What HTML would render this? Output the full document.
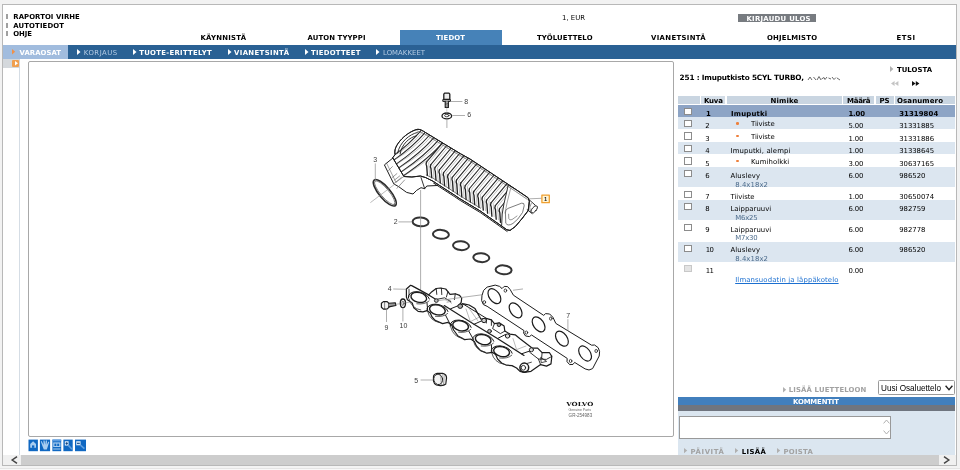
<!DOCTYPE html>
<html lang="fi"><head><meta charset="utf-8"><title>Varaosat</title>
<style>
html,body{margin:0;padding:0;width:960px;height:470px;overflow:hidden;background:#f2f2f2;}
body{position:relative;font-family:"DejaVu Sans","Liberation Sans",sans-serif;}
#app div{position:absolute;}
#app span.t{position:absolute;line-height:10px;white-space:nowrap;display:block;}
#app svg{position:absolute;overflow:visible;}
b,.b{font-weight:bold;}
</style></head><body><div id="app" style="position:absolute;left:0;top:0;width:960px;height:470px;overflow:hidden;will-change:transform;">
<div style="left:2px;top:4px;width:953.2px;height:460px;background:#fff;border:1px solid #b8b8b8;"></div>
<div style="left:0px;top:466px;width:960px;height:4px;background:#f3f3f3;"></div>
<div style="left:0px;top:468px;width:960px;height:0.8px;background:#e4e4e4;"></div>
<div style="left:0px;top:468.8px;width:960px;height:1.2px;background:#f8f8f8;"></div>
<div style="left:6.2px;top:14.2px;width:2.3px;height:4.8px;background:#a0a0a0;"></div>
<div style="left:6.2px;top:22.8px;width:2.3px;height:4.8px;background:#a0a0a0;"></div>
<div style="left:6.2px;top:31px;width:2.3px;height:4.8px;background:#a0a0a0;"></div>
<div style="left:400px;top:30px;width:102px;height:15px;background:#4682b8;"></div>
<div style="left:737.5px;top:14px;width:78px;height:7.6px;background:#777b80;"></div>
<div style="left:3px;top:44.6px;width:953px;height:14.3px;background:#2a6194;"></div>
<div style="left:3px;top:44.8px;width:65px;height:14.1px;background:#a1bcde;"></div>
<svg style="left:12px;top:49.2px" width="3.2" height="5.4" viewBox="0 0 3.2 5.4"><path d="M0 0 L3.2 2.7 L0 5.4 Z" fill="#f0914a"/></svg>
<svg style="left:77.2px;top:48.9px" width="3.5" height="6" viewBox="0 0 3.5 6"><path d="M0 0 L3.5 3.0 L0 6 Z" fill="#fff"/></svg>
<svg style="left:132.8px;top:48.9px" width="3.5" height="6" viewBox="0 0 3.5 6"><path d="M0 0 L3.5 3.0 L0 6 Z" fill="#fff"/></svg>
<svg style="left:227.5px;top:48.9px" width="3.5" height="6" viewBox="0 0 3.5 6"><path d="M0 0 L3.5 3.0 L0 6 Z" fill="#fff"/></svg>
<svg style="left:305px;top:48.9px" width="3.5" height="6" viewBox="0 0 3.5 6"><path d="M0 0 L3.5 3.0 L0 6 Z" fill="#fff"/></svg>
<svg style="left:376px;top:48.9px" width="3.5" height="6" viewBox="0 0 3.5 6"><path d="M0 0 L3.5 3.0 L0 6 Z" fill="#fff"/></svg>
<div style="left:3px;top:59px;width:16.5px;height:9px;background:#d4d8dc;"></div>
<div style="left:12.2px;top:60px;width:7px;height:7px;background:#f0a050;border-radius:1px;"></div>
<svg style="left:14.6px;top:61.2px" width="3" height="4.6" viewBox="0 0 3 4.6"><path d="M0 0 L3 2.3 L0 4.6 Z" fill="#fff"/></svg>
<div style="left:19.3px;top:68px;width:1px;height:387px;background:#d5dde5;"></div>
<div style="left:28px;top:61px;width:644px;height:374px;background:#fff;border:1px solid #a8a8a8;border-radius:2px;"></div>
<svg style="left:0;top:0" width="960" height="470" viewBox="0 0 960 470">
<rect x="28.5" y="439.6" width="9.4" height="11.6" fill="#1068c2"/>
<path d="M30.2,444 L33.1,441.2 L36,444 L36,447.8 L30.2,447.8 Z" fill="#a9cdf0"/><rect x="32" y="445.4" width="2.3" height="2.4" fill="#1068c2"/>
<rect x="39.9" y="439.6" width="10.2" height="11.6" fill="#1068c2"/>
<path d="M41.6,441 L43.6,445 L43.4,440.6 L44.6,440.6 L45.2,444.6 L45.8,440.4 L47,440.6 L46.8,444.8 L48.4,441.6 L49.2,442.2 L47.8,446.6 L46.8,449.4 L43.8,449.4 L42.4,446 L40.8,441.6 Z" fill="#a9cdf0"/>
<rect x="52.4" y="439.6" width="8.8" height="11.6" fill="#1068c2"/>
<rect x="52.4" y="439.6" width="8.8" height="1.8" fill="#5b9be0"/>
<rect x="53.2" y="442.4" width="7.3" height="4.6" fill="#a9cdf0"/><rect x="54.4" y="443.6" width="2" height="2.4" fill="#1068c2"/><rect x="57.2" y="443.6" width="2" height="2.4" fill="#1068c2"/>
<rect x="53.2" y="448.5" width="7.3" height="1" fill="#a9cdf0"/>
<rect x="63.4" y="439.6" width="9.3" height="11.6" fill="#1068c2"/>
<rect x="64.8" y="441.2" width="3.8" height="4.4" fill="#d4e6f8"/><path d="M65.5,443.4 L67.9,443.4 M66.7,442.2 L66.7,444.8" stroke="#0a3c78" stroke-width="0.9"/>
<path d="M68.4,445.4 L72,449.2" stroke="#5f9fe0" stroke-width="1.6"/>
<rect x="75" y="439.6" width="11" height="11.6" fill="#1068c2"/>
<rect x="76.2" y="441.2" width="4.4" height="4.1" fill="#d4e6f8"/><path d="M77,443.3 L79.8,443.3" stroke="#0a3c78" stroke-width="1"/>
<path d="M80.4,445.2 L84.4,448.6" stroke="#5f9fe0" stroke-width="1.6"/>
</svg>
<div style="left:3px;top:454.6px;width:953px;height:10.2px;background:#f0f0f0;"></div>
<div style="left:20.5px;top:454.6px;width:918.5px;height:10.2px;background:#cdcdcd;"></div>
<svg style="left:11px;top:455.6px" width="7" height="8" viewBox="0 0 7 8"><path d="M6 0.6 L1.2 4 L6 7.4" fill="none" stroke="#444" stroke-width="1.5"/></svg>
<svg style="left:942.5px;top:455.6px" width="7" height="8" viewBox="0 0 7 8"><path d="M1 0.6 L5.8 4 L1 7.4" fill="none" stroke="#444" stroke-width="1.5"/></svg>
<svg style="left:807px;top:75px" width="36" height="7" viewBox="0 0 36 7"><path d="M1 5 L3 2 L5 5 M6.5 2 L9 5 M10 5 L12 1.5 L14 5 M14.5 4 L17 2.5 L18 4.5 L20 2 M21.5 3 L24 4 M25 2 L27 4.5 L29 2.5 M30 3 L33 5" fill="none" stroke="#6a6a6a" stroke-width="1"/></svg>
<svg style="left:890px;top:65.6px" width="3.4" height="6" viewBox="0 0 3.4 6"><path d="M0 0 L3.4 3.0 L0 6 Z" fill="#b0b0b0"/></svg>
<svg style="left:891px;top:80.6px" width="8" height="5" viewBox="0 0 8 5"><path d="M3.6 0 L0 2.5 L3.6 5 Z M7.4 0 L3.8 2.5 L7.4 5 Z" fill="#c4c4c4"/></svg>
<svg style="left:911.6px;top:80.6px" width="8" height="5" viewBox="0 0 8 5"><path d="M0 0 L3.6 2.5 L0 5 Z M3.8 0 L7.4 2.5 L3.8 5 Z" fill="#111"/></svg>
<div style="left:678px;top:96.1px;width:21.8px;height:7.8px;background:#c9d5e1;"></div>
<div style="left:701.4px;top:96.1px;width:24.1px;height:7.8px;background:#d3dde7;"></div>
<div style="left:727.2px;top:96.1px;width:114.6px;height:7.8px;background:#c9d5e1;"></div>
<div style="left:843.4px;top:96.1px;width:30.6px;height:7.8px;background:#c9d5e1;"></div>
<div style="left:875.6px;top:96.1px;width:18.1px;height:7.8px;background:#c9d5e1;"></div>
<div style="left:895.3px;top:96.1px;width:59.5px;height:7.8px;background:#c9d5e1;"></div>
<div style="left:677.6px;top:104.8px;width:277.2px;height:11.9px;background:#8da4c5;"></div>
<div style="left:677.6px;top:117.0px;width:277.2px;height:12.0px;background:#dce6f0;"></div>
<div style="left:677.6px;top:142.1px;width:277.2px;height:11.7px;background:#dce6f0;"></div>
<div style="left:677.6px;top:167.0px;width:277.2px;height:20.4px;background:#dce6f0;"></div>
<div style="left:677.6px;top:200.4px;width:277.2px;height:20.0px;background:#dce6f0;"></div>
<div style="left:677.6px;top:241.7px;width:277.2px;height:20.2px;background:#dce6f0;"></div>
<div style="left:684.4px;top:107.60000000000001px;width:5.8px;height:5.3px;background:#fff;border:1px solid #8c8c8c;"></div>
<div style="left:684.4px;top:120.0px;width:5.8px;height:5.3px;background:#fff;border:1px solid #8c8c8c;"></div>
<div style="left:684.4px;top:132.4px;width:5.8px;height:5.3px;background:#fff;border:1px solid #8c8c8c;"></div>
<div style="left:684.4px;top:145.0px;width:5.8px;height:5.3px;background:#fff;border:1px solid #8c8c8c;"></div>
<div style="left:684.4px;top:157.4px;width:5.8px;height:5.3px;background:#fff;border:1px solid #8c8c8c;"></div>
<div style="left:684.4px;top:170.20000000000002px;width:5.8px;height:5.3px;background:#fff;border:1px solid #8c8c8c;"></div>
<div style="left:684.4px;top:190.8px;width:5.8px;height:5.3px;background:#fff;border:1px solid #8c8c8c;"></div>
<div style="left:684.4px;top:203.20000000000002px;width:5.8px;height:5.3px;background:#fff;border:1px solid #8c8c8c;"></div>
<div style="left:684.4px;top:224.0px;width:5.8px;height:5.3px;background:#fff;border:1px solid #8c8c8c;"></div>
<div style="left:684.4px;top:244.8px;width:5.8px;height:5.3px;background:#fff;border:1px solid #8c8c8c;"></div>
<div style="left:684.4px;top:265.2px;width:5.8px;height:5.3px;background:#e4e4e4;border:1px solid #c8c8c8;"></div>
<div style="left:736px;top:122.0px;width:2.6px;height:2.6px;background:#ee7f3a;border-radius:50%;"></div>
<div style="left:736px;top:134.5px;width:2.6px;height:2.6px;background:#ee7f3a;border-radius:50%;"></div>
<div style="left:736px;top:159.5px;width:2.6px;height:2.6px;background:#ee7f3a;border-radius:50%;"></div>
<svg style="left:783px;top:386.6px" width="3.2" height="5.4" viewBox="0 0 3.2 5.4"><path d="M0 0 L3.2 2.7 L0 5.4 Z" fill="#b0b0b0"/></svg>
<div style="left:878px;top:380.2px;width:74.6px;height:12.4px;background:#fff;border:1px solid #9a9a9a;border-radius:1.5px;"></div>
<svg style="left:944.5px;top:385.2px" width="8" height="6" viewBox="0 0 8 6"><path d="M0.6 0.8 L4 4.6 L7.4 0.8" fill="none" stroke="#222" stroke-width="1.4"/></svg>
<div style="left:678px;top:397.2px;width:276.8px;height:8px;background:#417fbd;"></div>
<div style="left:678px;top:405.2px;width:276.8px;height:6px;background:#6f757f;"></div>
<div style="left:678px;top:411.2px;width:276.8px;height:43.6px;background:#dbe6f0;"></div>
<div style="left:679.2px;top:416px;width:210.2px;height:20.6px;background:#fff;border:1px solid #999;"></div>
<svg style="left:882.5px;top:418.5px" width="7" height="17" viewBox="0 0 7 17"><path d="M0.6 4.4 L3.5 1 L6.4 4.4 M0.6 11.6 L3.5 15 L6.4 11.6" fill="none" stroke="#b0b0b0" stroke-width="1"/></svg>
<svg style="left:683.5px;top:448.2px" width="3.2" height="5.2" viewBox="0 0 3.2 5.2"><path d="M0 0 L3.2 2.6 L0 5.2 Z" fill="#b0b0b0"/></svg>
<svg style="left:735px;top:448.2px" width="3.2" height="5.2" viewBox="0 0 3.2 5.2"><path d="M0 0 L3.2 2.6 L0 5.2 Z" fill="#b0b0b0"/></svg>
<svg style="left:776.6px;top:448.2px" width="3.2" height="5.2" viewBox="0 0 3.2 5.2"><path d="M0 0 L3.2 2.6 L0 5.2 Z" fill="#b0b0b0"/></svg>
<svg style="left:0;top:0" width="960" height="470" viewBox="0 0 960 470" font-family="'Liberation Sans','DejaVu Sans',sans-serif" stroke-linejoin="round" stroke-linecap="round">
<path d="M443.8,94.2 L444.6,93.2 L449,93.2 L449.8,94.2 L449.8,99.4 L443.8,99.4 Z" fill="#ededed" stroke="#1c1c1c" stroke-width="1.3" />
<path d="M443.2,99.6 L450.4,99.6 L450.4,101.4 L443.2,101.4 Z" fill="#ccc" stroke="#1c1c1c" stroke-width="1.0" />
<path d="M445.2,101.4 L445.2,107.4 L448.4,107.4 L448.4,101.4" fill="#bbb" stroke="#1c1c1c" stroke-width="1.1" />
<path d="M445.4,103 L448.2,103.6 M445.4,104.6 L448.2,105.2" fill="none" stroke="#1c1c1c" stroke-width="0.5" />
<path d="M451,101.5 L462,101.5" fill="none" stroke="#8c8c8c" stroke-width="0.7" />
<text x="464.3" y="103.7" font-size="7.0" fill="#3a3a3a" text-anchor="start" >8</text>
<ellipse cx="446.8" cy="115.9" rx="4.8" ry="2.9" transform="rotate(0 446.8 115.9)" fill="#fff" stroke="#1c1c1c" stroke-width="1.3"/>
<ellipse cx="446.8" cy="115.6" rx="2.2" ry="1.2" transform="rotate(0 446.8 115.6)" fill="#fff" stroke="#1c1c1c" stroke-width="0.8"/>
<path d="M452.6,115.5 L464.6,115.5" fill="none" stroke="#8c8c8c" stroke-width="0.7" />
<text x="467.2" y="116.9" font-size="7.0" fill="#3a3a3a" text-anchor="start" >6</text>
<path d="M446.9,119 L446.9,127.6" fill="none" stroke="#8c8c8c" stroke-width="0.7" />
<path d="M446.8,108 L446.8,112.4" fill="none" stroke="#aaa" stroke-width="0.6" stroke-dasharray="1 1"/>
<clipPath id="cv"><path d="M395,154.3 C394,150 396,145 401.9,138.8 C406,134.5 413,130 417.9,129.3 C420.5,129.2 423,131 425.3,132.4 L444.5,144.1 L460.4,153.7 L470,159 L516.6,190 L528.1,197.8 L529.3,201.2 L528.2,210.5 L521.7,219 L515.3,226.5 L510,230.4 L506.8,229.7 L480,210.8 L460,198.8 L454.5,195.1 L439.6,185.5 L433.2,181.3 L425.7,177.6 L420.4,176 L411.9,177 L403.9,176.5 L392.9,158 Z"/></clipPath>
<path d="M395,154.3 C394,150 396,145 401.9,138.8 C406,134.5 413,130 417.9,129.3 C420.5,129.2 423,131 425.3,132.4 L444.5,144.1 L460.4,153.7 L470,159 L516.6,190 L528.1,197.8 L529.3,201.2 L528.2,210.5 L521.7,219 L515.3,226.5 L510,230.4 L506.8,229.7 L480,210.8 L460,198.8 L454.5,195.1 L439.6,185.5 L433.2,181.3 L425.7,177.6 L420.4,176 L411.9,177 L403.9,176.5 L392.9,158 Z" fill="#fff" stroke="#1c1c1c" stroke-width="1.0" />
<g clip-path="url(#cv)">
<path d="M421.0,130.6 Q408.6,145.0 393.6,155.5" fill="none" stroke="#262626" stroke-width="1.05"/>
<path d="M422.8,131.8 Q410.6,146.4 395.0,154.9" fill="none" stroke="#7a7a7a" stroke-width="0.45"/>
<path d="M425.3,132.4 Q412.9,146.8 394.1,159.9" fill="none" stroke="#262626" stroke-width="1.05"/>
<path d="M427.1,133.6 Q414.9,148.2 395.5,159.3" fill="none" stroke="#7a7a7a" stroke-width="0.45"/>
<path d="M429.6,135.0 Q417.2,149.5 396.5,163.9" fill="none" stroke="#262626" stroke-width="1.05"/>
<path d="M431.4,136.2 Q419.2,150.9 397.9,163.3" fill="none" stroke="#7a7a7a" stroke-width="0.45"/>
<path d="M433.9,137.6 Q421.6,152.1 398.8,167.9" fill="none" stroke="#262626" stroke-width="1.05"/>
<path d="M435.7,138.8 Q423.6,153.5 400.2,167.3" fill="none" stroke="#7a7a7a" stroke-width="0.45"/>
<path d="M438.2,140.3 Q425.9,154.7 401.2,171.9" fill="none" stroke="#262626" stroke-width="1.05"/>
<path d="M440.0,141.5 Q427.9,156.1 402.6,171.3" fill="none" stroke="#7a7a7a" stroke-width="0.45"/>
<path d="M426.5,162.1 Q425.5,164.1 426.7,166.1 L427.4,175.4" fill="none" stroke="#222" stroke-width="1.35"/>
<path d="M442.5,142.9 Q430.2,157.3 403.5,175.8" fill="none" stroke="#262626" stroke-width="1.05"/>
<path d="M444.3,144.1 Q432.2,158.7 404.9,175.2" fill="none" stroke="#7a7a7a" stroke-width="0.45"/>
<path d="M442.5,142.9 L426.5,162.1" fill="none" stroke="#262626" stroke-width="1.05"/>
<path d="M444.2,144.2 L428.7,162.7 L429.6,175.9" fill="none" stroke="#7a7a7a" stroke-width="0.45"/>
<path d="M430.8,164.7 Q429.8,166.7 431.0,168.7 L431.7,177.6" fill="none" stroke="#222" stroke-width="1.35"/>
<path d="M446.8,145.5 L430.8,164.7" fill="none" stroke="#262626" stroke-width="1.05"/>
<path d="M448.5,146.8 L433.0,165.3 L433.9,178.1" fill="none" stroke="#7a7a7a" stroke-width="0.45"/>
<path d="M435.1,167.3 Q434.1,169.3 435.3,171.3 L436.0,180.1" fill="none" stroke="#222" stroke-width="1.35"/>
<path d="M451.1,148.1 L435.1,167.3" fill="none" stroke="#262626" stroke-width="1.05"/>
<path d="M452.8,149.4 L437.3,167.9 L438.2,180.6" fill="none" stroke="#7a7a7a" stroke-width="0.45"/>
<path d="M439.4,169.9 Q438.4,171.9 439.6,173.9 L440.3,183.0" fill="none" stroke="#222" stroke-width="1.35"/>
<path d="M455.4,150.7 L439.4,169.9" fill="none" stroke="#262626" stroke-width="1.05"/>
<path d="M457.1,152.0 L441.6,170.5 L442.5,183.5" fill="none" stroke="#7a7a7a" stroke-width="0.45"/>
<path d="M443.7,172.5 Q442.7,174.5 443.9,176.5 L444.6,185.7" fill="none" stroke="#222" stroke-width="1.35"/>
<path d="M459.7,153.3 L443.7,172.5" fill="none" stroke="#262626" stroke-width="1.05"/>
<path d="M461.4,154.6 L445.9,173.1 L446.8,186.2" fill="none" stroke="#7a7a7a" stroke-width="0.45"/>
<path d="M448.0,174.9 Q447.0,176.9 448.2,178.9 L448.9,188.5" fill="none" stroke="#222" stroke-width="1.35"/>
<path d="M464.0,155.7 L448.0,174.9" fill="none" stroke="#262626" stroke-width="1.05"/>
<path d="M465.7,157.0 L450.2,175.5 L451.1,189.0" fill="none" stroke="#7a7a7a" stroke-width="0.45"/>
<path d="M452.3,177.3 Q451.3,179.3 452.5,181.3 L453.2,191.3" fill="none" stroke="#222" stroke-width="1.35"/>
<path d="M468.3,158.1 L452.3,177.3" fill="none" stroke="#262626" stroke-width="1.05"/>
<path d="M470.0,159.4 L454.5,177.9 L455.4,191.8" fill="none" stroke="#7a7a7a" stroke-width="0.45"/>
<path d="M456.6,179.9 Q455.6,181.9 456.8,183.9 L457.5,194.1" fill="none" stroke="#222" stroke-width="1.35"/>
<path d="M472.6,160.7 L456.6,179.9" fill="none" stroke="#262626" stroke-width="1.05"/>
<path d="M474.3,162.0 L458.8,180.5 L459.7,194.6" fill="none" stroke="#7a7a7a" stroke-width="0.45"/>
<path d="M460.9,182.8 Q459.9,184.8 461.1,186.8 L461.8,196.9" fill="none" stroke="#222" stroke-width="1.35"/>
<path d="M476.9,163.6 L460.9,182.8" fill="none" stroke="#262626" stroke-width="1.05"/>
<path d="M478.6,164.9 L463.1,183.4 L464.0,197.4" fill="none" stroke="#7a7a7a" stroke-width="0.45"/>
<path d="M465.2,185.7 Q464.2,187.7 465.4,189.7 L466.1,199.5" fill="none" stroke="#222" stroke-width="1.35"/>
<path d="M481.2,166.5 L465.2,185.7" fill="none" stroke="#262626" stroke-width="1.05"/>
<path d="M482.9,167.8 L467.4,186.3 L468.3,200.0" fill="none" stroke="#7a7a7a" stroke-width="0.45"/>
<path d="M469.5,188.5 Q468.5,190.5 469.7,192.5 L470.4,202.0" fill="none" stroke="#222" stroke-width="1.35"/>
<path d="M485.5,169.3 L469.5,188.5" fill="none" stroke="#262626" stroke-width="1.05"/>
<path d="M487.2,170.6 L471.7,189.1 L472.6,202.5" fill="none" stroke="#7a7a7a" stroke-width="0.45"/>
<path d="M473.8,191.4 Q472.8,193.4 474.0,195.4 L474.7,204.6" fill="none" stroke="#222" stroke-width="1.35"/>
<path d="M489.8,172.2 L473.8,191.4" fill="none" stroke="#262626" stroke-width="1.05"/>
<path d="M491.5,173.5 L476.0,192.0 L476.9,205.1" fill="none" stroke="#7a7a7a" stroke-width="0.45"/>
<path d="M478.1,194.2 Q477.1,196.2 478.3,198.2 L479.0,207.2" fill="none" stroke="#222" stroke-width="1.35"/>
<path d="M494.1,175.0 L478.1,194.2" fill="none" stroke="#262626" stroke-width="1.05"/>
<path d="M495.8,176.3 L480.3,194.8 L481.2,207.7" fill="none" stroke="#7a7a7a" stroke-width="0.45"/>
<path d="M482.4,197.1 Q481.4,199.1 482.6,201.1 L483.3,210.1" fill="none" stroke="#222" stroke-width="1.35"/>
<path d="M498.4,177.9 L482.4,197.1" fill="none" stroke="#262626" stroke-width="1.05"/>
<path d="M500.1,179.2 L484.6,197.7 L485.5,210.6" fill="none" stroke="#7a7a7a" stroke-width="0.45"/>
<path d="M486.7,200.0 Q485.7,202.0 486.9,204.0 L487.6,213.2" fill="none" stroke="#222" stroke-width="1.35"/>
<path d="M502.7,180.8 L486.7,200.0" fill="none" stroke="#262626" stroke-width="1.05"/>
<path d="M504.4,182.1 L488.9,200.6 L489.8,213.7" fill="none" stroke="#7a7a7a" stroke-width="0.45"/>
<path d="M491.0,202.8 Q490.0,204.8 491.2,206.8 L491.9,216.2" fill="none" stroke="#222" stroke-width="1.35"/>
<path d="M507.0,183.6 L491.0,202.8" fill="none" stroke="#262626" stroke-width="1.05"/>
<path d="M508.7,184.9 L493.2,203.4 L494.1,216.7" fill="none" stroke="#7a7a7a" stroke-width="0.45"/>
<path d="M495.3,205.7 Q494.3,207.7 495.5,209.7 L496.2,219.2" fill="none" stroke="#222" stroke-width="1.35"/>
<path d="M511.3,186.5 L495.3,205.7" fill="none" stroke="#262626" stroke-width="1.05"/>
<path d="M513.0,187.8 L497.5,206.3 L498.4,219.7" fill="none" stroke="#7a7a7a" stroke-width="0.45"/>
<path d="M499.6,208.5 Q498.6,210.5 499.8,212.5 L500.5,222.3" fill="none" stroke="#222" stroke-width="1.35"/>
<path d="M515.6,189.3 L499.6,208.5" fill="none" stroke="#262626" stroke-width="1.05"/>
<path d="M517.3,190.6 L501.8,209.1 L502.7,222.8" fill="none" stroke="#7a7a7a" stroke-width="0.45"/>
<path d="M503.9,211.4 Q502.9,213.4 504.1,215.4 L504.8,225.3" fill="none" stroke="#222" stroke-width="1.35"/>
<path d="M519.9,192.2 L503.9,211.4" fill="none" stroke="#262626" stroke-width="1.05"/>
<path d="M521.6,193.5 L506.1,212.0 L507.0,225.8" fill="none" stroke="#7a7a7a" stroke-width="0.45"/>
<path d="M508.2,214.4 Q507.2,216.4 508.4,218.4 L509.1,226.7" fill="none" stroke="#222" stroke-width="1.35"/>
<path d="M524.2,195.2 L508.2,214.4" fill="none" stroke="#262626" stroke-width="1.05"/>
<path d="M525.9,196.5 L510.4,215.0 L511.3,227.2" fill="none" stroke="#7a7a7a" stroke-width="0.45"/>
<path d="M417.3,132.5 C409.7,134.2 399.9,141.9 397.6,153.0" fill="none" stroke="#1c1c1c" stroke-width="0.9"/>
<path d="M416.6,135.7 C409.4,137.4 401.8,143.8 400.1,153.9" fill="none" stroke="#1c1c1c" stroke-width="0.9"/>
</g>
<path d="M508.6,185.2 L516.6,190 L528.1,197.8 L529.3,201.2 L528.2,210.5 L521.7,219 L515.3,226.5 L510,230.4 L506.8,229.7 L501.6,226 L502.2,214 L504,203.6 Z" fill="#fff" stroke="#1c1c1c" stroke-width="0.9" />
<path d="M505.4,212.6 Q505,209.6 508,208.4 L521.6,203.2 Q524.4,202.6 524.2,205.6 L522.6,212.4 Q518,220 513,223.4 Q508,226.6 506,223.6 Z" fill="none" stroke="#444" stroke-width="0.7" />
<path d="M508.6,214.2 L508.8,218.6 Q509.4,220.6 512,219.6 L517,216" fill="none" stroke="#555" stroke-width="0.6" />
<path d="M510.6,188.6 L507,203 L505,213" fill="none" stroke="#666" stroke-width="0.6" />
<path d="M417.0,130.8 L424.4,133.9 L443.6,145.6 L459.5,155.2 L469.1,160.5 L515.7,191.5 L527.2,199.3" fill="none" stroke="#444" stroke-width="0.6" />
<path d="M433.5,183.0 L439.9,187.2 L454.8,196.8 L460.3,200.5 L480.3,212.5 L507.1,231.4" fill="none" stroke="#1c1c1c" stroke-width="1.0" />
<path d="M426.3,175.0 L433.8,178.7 L440.2,182.9 L455.1,192.5 L460.6,196.2 L480.6,208.2" fill="none" stroke="#333" stroke-width="0.7" />
<path d="M395,154.3 C394,150 396,145 401.9,138.8 C406,134.5 413,130 417.9,129.3 C420.5,129.2 423,131 425.3,132.4 L444.5,144.1 L460.4,153.7 L470,159 L516.6,190 L528.1,197.8 L529.3,201.2 L528.2,210.5 L521.7,219 L515.3,226.5 L510,230.4 L506.8,229.7 L480,210.8 L460,198.8 L454.5,195.1 L439.6,185.5 L433.2,181.3 L425.7,177.6 L420.4,176 L411.9,177 L403.9,176.5 L392.9,158 Z" fill="none" stroke="#1c1c1c" stroke-width="1.0" />
<path d="M528.6,199.2 L535.3,205.2 M527.2,209.8 L532.2,213.6" fill="none" stroke="#1c1c1c" stroke-width="0.9" />
<ellipse cx="534.2" cy="209.4" rx="2.1" ry="4.3" transform="rotate(38 534.2 209.4)" fill="#fff" stroke="#1c1c1c" stroke-width="0.9"/>
<path d="M531.2,203.4 Q528.6,207 530.2,211.6" fill="none" stroke="#444" stroke-width="0.6" />
<path d="M392.9,158 L384.4,164.9 L393.8,183.9 L398.6,186.6 L406.6,192.4 L413,194 L416.7,190.3 L421,187.7 L424.7,188.7 L426.8,186 L437.4,185.5" fill="none" stroke="#1c1c1c" stroke-width="1.0" />
<path d="M421,177.5 L424.7,188.7" fill="none" stroke="#1c1c1c" stroke-width="0.9" />
<path d="M386.6,163.2 L395.8,182 M394,183.5 L403.9,176.5" fill="none" stroke="#555" stroke-width="0.55" />
<path d="M392.4,166.6 L388.6,170.4 M396.9,173.6 L392.4,177.4 M401.4,177.4 L396.3,181.9 M404.6,180 L397,188.3 M399.6,176 L394.6,180" fill="none" stroke="#555" stroke-width="0.6" />
<path d="M529.4,198.8 L541.4,198.3" fill="none" stroke="#8c8c8c" stroke-width="0.7" />
<rect x="541.9" y="195.1" width="7.4" height="7.6" fill="#fff6d8" stroke="#f0a030" stroke-width="1.3"/>
<text x="545.6" y="201.4" font-size="5.6" fill="#222" text-anchor="middle" font-weight="bold">1</text>
<ellipse cx="384.8" cy="192.8" rx="16.6" ry="5.6" transform="rotate(50 384.8 192.8)" fill="none" stroke="#2a2a2a" stroke-width="1.6"/>
<ellipse cx="384.8" cy="192.8" rx="15.2" ry="4.2" transform="rotate(50 384.8 192.8)" fill="none" stroke="#555" stroke-width="0.7"/>
<text x="373.2" y="162" font-size="7.0" fill="#3a3a3a" text-anchor="start" >3</text>
<path d="M375.3,163.8 L375.3,179.8" fill="none" stroke="#8c8c8c" stroke-width="0.7" />
<path d="M370.7,202.4 L394.4,184.5" fill="none" stroke="#8c8c8c" stroke-width="0.6" />
<ellipse cx="420.6" cy="221.9" rx="8.0" ry="4.4" transform="rotate(4 420.6 221.9)" fill="none" stroke="#333" stroke-width="2.0"/>
<ellipse cx="440.9" cy="234.3" rx="8.0" ry="4.4" transform="rotate(4 440.9 234.3)" fill="none" stroke="#333" stroke-width="2.0"/>
<ellipse cx="461" cy="245.7" rx="8.0" ry="4.4" transform="rotate(4 461 245.7)" fill="none" stroke="#333" stroke-width="2.0"/>
<ellipse cx="481.3" cy="257.7" rx="8.0" ry="4.4" transform="rotate(4 481.3 257.7)" fill="none" stroke="#333" stroke-width="2.0"/>
<ellipse cx="503.6" cy="269.8" rx="8.0" ry="4.4" transform="rotate(4 503.6 269.8)" fill="none" stroke="#333" stroke-width="2.0"/>
<text x="393.8" y="224.2" font-size="7.0" fill="#3a3a3a" text-anchor="start" >2</text>
<path d="M398.8,221.9 L411.8,221.9" fill="none" stroke="#8c8c8c" stroke-width="0.7" />
<path d="M420.6,190.4 L420.6,297.8" fill="none" stroke="#8c8c8c" stroke-width="0.7" />
<path d="M406.4,289.0 L410.6,285.3 L412.2,285.9 L428.7,294.9 L431.9,291.7 L436.2,288.5 L440.4,288.0 L445.7,289.0 L447.9,291.7 L450.0,294.4 L455.3,293.8 L459.6,295.4 L461.7,298.1 L461.2,302.3 L459.6,304.5 L463.8,303.9 L469.1,305.0 L475.0,308.6 L481.0,319.2 L486.2,318.4 L491.4,319.9 L494.4,323.6 L499.6,322.9 L504.1,325.9 L504.8,331.1 L510.0,334.1 L515.2,334.8 L519.7,338.5 L532.4,348.2 L537.6,348.2 L542.1,352.7 L549.5,352.7 L551.8,356.4 L551.0,363.9 L546.5,366.1 L540.6,364.6 L531.0,371.3 L531.0,371.3 L524.2,372.4 L520.0,371.4 L516.6,368.0 L512.0,365.6 L506.5,365.2 L501.6,363.0 L497.6,359.0 L495.6,354.6 L492.6,352.4 L486.9,353.2 L480.6,350.6 L476.4,346.0 L474.4,341.4 L470.6,339.0 L464.6,339.6 L458.0,336.0 L453.6,330.0 L451.4,324.4 L447.9,322.4 L442.6,323.6 L435.1,320.4 L432.0,317.0 L430.3,313.0 L427.0,310.6 L422.9,311.9 L418.1,311.4 L413.8,307.7 L412.2,302.9 L407.4,299.7 L406.4,297.0 Z" fill="#fff" stroke="#1c1c1c" stroke-width="1.2" />
<path d="M409,289.2 L409,296.4" fill="none" stroke="#1c1c1c" stroke-width="0.8" />
<path d="M428.7,294.9 L436,299.6 M444.3,305.6 L474,324.3 L497.4,338.6 L524,355.4" fill="none" stroke="#1c1c1c" stroke-width="1.2" />
<path d="M462.3,303.5 L485.7,317.9" fill="none" stroke="#1c1c1c" stroke-width="1.0" />
<path d="M450.6,308.8 L459.7,305.1 M474,324.3 L483.6,320 M497.4,338.6 L505.6,334.4 M521.6,353.8 L529.8,351" fill="none" stroke="#1c1c1c" stroke-width="1.0" />
<path d="M466,309 L470.4,321.6 L480,316.8 M468.6,307.6 L478,321 M513,338.6 L516.6,349.6 L526,346" fill="none" stroke="#777" stroke-width="0.5" />
<path d="M408.4,298.0 A10.6,6.4 14 0 1 429.4,299.0" fill="none" stroke="#1c1c1c" stroke-width="1.0" />
<path d="M427.0,310.5 A10.6,6.4 14 0 1 448.0,311.5" fill="none" stroke="#1c1c1c" stroke-width="1.0" />
<path d="M450.2,326.4 A10.6,6.4 14 0 1 471.2,327.4" fill="none" stroke="#1c1c1c" stroke-width="1.0" />
<path d="M472.8,340.2 A10.6,6.4 14 0 1 493.8,341.2" fill="none" stroke="#1c1c1c" stroke-width="1.0" />
<path d="M491.2,352.2 A10.6,6.4 14 0 1 512.2,353.2" fill="none" stroke="#1c1c1c" stroke-width="1.0" />
<ellipse cx="418.8" cy="297.4" rx="8.0" ry="4.9" transform="rotate(14 418.8 297.4)" fill="#fff" stroke="#1c1c1c" stroke-width="1.4"/>
<ellipse cx="437.4" cy="309.9" rx="8.0" ry="4.9" transform="rotate(14 437.4 309.9)" fill="#fff" stroke="#1c1c1c" stroke-width="1.4"/>
<ellipse cx="460.6" cy="325.8" rx="8.0" ry="4.9" transform="rotate(14 460.6 325.8)" fill="#fff" stroke="#1c1c1c" stroke-width="1.4"/>
<ellipse cx="483.2" cy="339.6" rx="8.0" ry="4.9" transform="rotate(14 483.2 339.6)" fill="#fff" stroke="#1c1c1c" stroke-width="1.4"/>
<ellipse cx="501.6" cy="351.6" rx="8.0" ry="4.9" transform="rotate(14 501.6 351.6)" fill="#fff" stroke="#1c1c1c" stroke-width="1.4"/>
<path d="M427.0,302.8 L427.6,309.7" fill="none" stroke="#1c1c1c" stroke-width="1.0" />
<path d="M445.6,315.3 L450.8,325.6" fill="none" stroke="#1c1c1c" stroke-width="1.0" />
<path d="M468.8,331.2 L473.4,339.4" fill="none" stroke="#1c1c1c" stroke-width="1.0" />
<path d="M491.4,345.0 L491.8,351.4" fill="none" stroke="#1c1c1c" stroke-width="1.0" />
<path d="M409.0,298.9 Q411.3,308.4 420.8,310.0" fill="none" stroke="#333" stroke-width="0.8" />
<path d="M416.8,303.8 Q424.8,304.8 429.0,301.0" fill="none" stroke="#333" stroke-width="0.8" />
<path d="M427.6,311.4 Q429.9,320.9 439.4,322.5" fill="none" stroke="#333" stroke-width="0.8" />
<path d="M435.4,316.3 Q443.4,317.3 447.6,313.5" fill="none" stroke="#333" stroke-width="0.8" />
<path d="M450.8,327.3 Q453.1,336.8 462.6,338.4" fill="none" stroke="#333" stroke-width="0.8" />
<path d="M458.6,332.2 Q466.6,333.2 470.8,329.4" fill="none" stroke="#333" stroke-width="0.8" />
<path d="M473.4,341.1 Q475.7,350.6 485.2,352.2" fill="none" stroke="#333" stroke-width="0.8" />
<path d="M481.2,346.0 Q489.2,347.0 493.4,343.2" fill="none" stroke="#333" stroke-width="0.8" />
<path d="M491.8,353.1 Q494.1,362.6 503.6,364.2" fill="none" stroke="#333" stroke-width="0.8" />
<path d="M499.6,358.0 Q507.6,359.0 511.8,355.2" fill="none" stroke="#333" stroke-width="0.8" />
<path d="M436.4,299.4 L444.6,297.8 L450.6,301.6 M447.9,291.7 L446.4,297 M436.2,288.5 L436.8,294.4 M441.4,288.2 L441.8,294.6 M455.3,293.8 L454.4,299.6 M486.2,318.4 L486.4,323 M491.4,319.9 L491.4,325.4 M494.4,323.6 L492.6,328.6 L500.4,333.6 L504.8,331.1 M532.4,348.2 L529.6,352.2 L538.4,359 L546.4,359.4 L551.8,356.4 M538.4,359 L540.6,364.6 M542.1,352.7 L541.6,358.4" fill="none" stroke="#1c1c1c" stroke-width="0.9" />
<ellipse cx="436.4" cy="300.6" rx="2.0" ry="1.8" transform="rotate(0 436.4 300.6)" fill="#bbb" stroke="#1c1c1c" stroke-width="0.9"/>
<ellipse cx="460.2" cy="306.2" rx="2.4" ry="2.2" transform="rotate(0 460.2 306.2)" fill="#aaa" stroke="#1c1c1c" stroke-width="1.0"/>
<ellipse cx="484.1" cy="320.5" rx="2.4" ry="2.2" transform="rotate(0 484.1 320.5)" fill="#ccc" stroke="#1c1c1c" stroke-width="1.0"/>
<ellipse cx="489.5" cy="331.2" rx="1.9" ry="1.8" transform="rotate(0 489.5 331.2)" fill="#bbb" stroke="#1c1c1c" stroke-width="0.9"/>
<ellipse cx="499" cy="324.8" rx="1.9" ry="1.8" transform="rotate(0 499 324.8)" fill="#999" stroke="#1c1c1c" stroke-width="0.9"/>
<ellipse cx="507.6" cy="336" rx="2.2" ry="2.1" transform="rotate(0 507.6 336)" fill="#ddd" stroke="#1c1c1c" stroke-width="1.0"/>
<ellipse cx="531.4" cy="349.8" rx="2.1" ry="2.0" transform="rotate(0 531.4 349.8)" fill="#ddd" stroke="#1c1c1c" stroke-width="0.9"/>
<path d="M446,300 Q449,298.6 451,301 M447,302 Q449.6,300.6 451.6,303" fill="none" stroke="#444" stroke-width="0.5" />
<ellipse cx="524.3" cy="367.6" rx="4.4" ry="4.5" transform="rotate(0 524.3 367.6)" fill="#fff" stroke="#1c1c1c" stroke-width="1.5"/>
<ellipse cx="523.4" cy="367.8" rx="2.2" ry="2.4" transform="rotate(0 523.4 367.8)" fill="none" stroke="#1c1c1c" stroke-width="0.9"/>
<path d="M526.6,363.6 L531.4,362.2 M541,357.6 L546.6,361.4 L541.6,362.6 Z" fill="none" stroke="#1c1c1c" stroke-width="0.8" />
<text x="387.8" y="291.4" font-size="7.0" fill="#3a3a3a" text-anchor="start" >4</text>
<path d="M393.6,289 L405.9,289.3" fill="none" stroke="#8c8c8c" stroke-width="0.7" />
<path d="M381.4,303.2 L383.4,301.6 L387.2,301.6 L388.9,303.4 L388.9,307.4 L387,309.1 L383.4,309.1 L381.4,307.2 Z" fill="#f2f2f2" stroke="#1c1c1c" stroke-width="1.2" />
<path d="M384.6,301.8 L384.6,308.9" fill="none" stroke="#1c1c1c" stroke-width="0.5" />
<path d="M388.9,303.2 L395.3,302.7 L395.9,305.5 L388.9,306.9" fill="#999" stroke="#1c1c1c" stroke-width="1.1" />
<ellipse cx="402.9" cy="303.3" rx="2.6" ry="4.3" transform="rotate(0 402.9 303.3)" fill="#fff" stroke="#1c1c1c" stroke-width="1.3"/>
<ellipse cx="402.9" cy="303.3" rx="1.1" ry="2.2" transform="rotate(0 402.9 303.3)" fill="none" stroke="#1c1c1c" stroke-width="0.6"/>
<path d="M405.8,302.7 L411.4,302.1 M396.4,304.2 L399.8,303.8" fill="none" stroke="#8c8c8c" stroke-width="0.6" />
<path d="M386.5,309.6 L386.5,321.6 M402.9,308 L402.9,321" fill="none" stroke="#8c8c8c" stroke-width="0.7" />
<text x="384.6" y="330" font-size="7.0" fill="#3a3a3a" text-anchor="start" >9</text>
<text x="399.6" y="327.9" font-size="7.0" fill="#3a3a3a" text-anchor="start" >10</text>
<path d="M438,300.6 L497,292.8 M513.4,290.2 L522.6,289" fill="none" stroke="#8c8c8c" stroke-width="0.7" />
<path d="M482.1,295.2 L483.6,290.4 L487.1,287.1 L495.2,285.1 L499.6,286.4 L502,288.6 L504.2,286.4 L507.6,286.6 L510.2,289.6 L513.4,295.2 L543.7,315.4 L545.6,313.6 L549.7,314 L553,317.4 L555.8,323.4 L591.6,345.2 L594.6,345 L598.2,347.7 L599.6,351.6 L599.2,356 L592.6,368.6 L589,370 L585.1,368.9 L574.6,362.4 L573,364.4 L569.6,364.6 L567,361.6 L567.2,358.4 L531.6,335 L529.4,336.6 L525.6,336 L523.6,333 L524,330.6 L487.1,306.3 L483.4,304.6 L481.8,301 Z" fill="#fff" stroke="#1c1c1c" stroke-width="1.0" />
<ellipse cx="494.4" cy="296.2" rx="8.4" ry="5.2" transform="rotate(55 494.4 296.2)" fill="#fff" stroke="#1c1c1c" stroke-width="1.2"/>
<ellipse cx="515.6" cy="310.3" rx="8.4" ry="5.2" transform="rotate(55 515.6 310.3)" fill="#fff" stroke="#1c1c1c" stroke-width="1.2"/>
<ellipse cx="538.6" cy="324.4" rx="8.4" ry="5.2" transform="rotate(55 538.6 324.4)" fill="#fff" stroke="#1c1c1c" stroke-width="1.2"/>
<ellipse cx="561.9" cy="338.6" rx="8.4" ry="5.2" transform="rotate(55 561.9 338.6)" fill="#fff" stroke="#1c1c1c" stroke-width="1.2"/>
<ellipse cx="585.1" cy="353.5" rx="8.4" ry="5.2" transform="rotate(55 585.1 353.5)" fill="#fff" stroke="#1c1c1c" stroke-width="1.2"/>
<ellipse cx="484.3" cy="302.2" rx="1.3" ry="1.6" transform="rotate(0 484.3 302.2)" fill="#fff" stroke="#1c1c1c" stroke-width="0.8"/>
<ellipse cx="505.4" cy="290.6" rx="1.3" ry="1.6" transform="rotate(0 505.4 290.6)" fill="#fff" stroke="#1c1c1c" stroke-width="0.8"/>
<ellipse cx="526.4" cy="332.6" rx="1.3" ry="1.6" transform="rotate(0 526.4 332.6)" fill="#fff" stroke="#1c1c1c" stroke-width="0.8"/>
<ellipse cx="550.8" cy="318.6" rx="1.3" ry="1.6" transform="rotate(0 550.8 318.6)" fill="#fff" stroke="#1c1c1c" stroke-width="0.8"/>
<ellipse cx="570.6" cy="361" rx="1.3" ry="1.6" transform="rotate(0 570.6 361)" fill="#fff" stroke="#1c1c1c" stroke-width="0.8"/>
<ellipse cx="596.2" cy="351" rx="1.3" ry="1.6" transform="rotate(0 596.2 351)" fill="#fff" stroke="#1c1c1c" stroke-width="0.8"/>
<text x="566.2" y="318" font-size="7.0" fill="#3a3a3a" text-anchor="start" >7</text>
<path d="M567.9,319.6 L567.9,330.6" fill="none" stroke="#8c8c8c" stroke-width="0.7" />
<path d="M433.4,377.4 Q433.2,374.2 437.2,373.2 L442.6,373.4 Q446.6,374.4 446.6,378 L445.8,384 Q444,385.8 440.2,385.6 L436.4,385 Q433.8,383.6 433.4,381 Z" fill="#fff" stroke="#1c1c1c" stroke-width="1.1" />
<ellipse cx="438.2" cy="379.4" rx="4.4" ry="5.2" transform="rotate(-12 438.2 379.4)" fill="#f4f4f4" stroke="#1c1c1c" stroke-width="0.9"/>
<path d="M440.6,374 L441.4,385.2 M442.8,374.2 L443.6,384.8 M444.8,375 L445.2,384" fill="none" stroke="#555" stroke-width="0.5" />
<text x="414.2" y="383.2" font-size="7.0" fill="#3a3a3a" text-anchor="start" >5</text>
<path d="M421,380 L432.6,380" fill="none" stroke="#8c8c8c" stroke-width="0.7" />
<text x="579.8" y="406" font-size="5.6" fill="#111" text-anchor="middle" font-family="'DejaVu Serif','Liberation Serif',serif" font-weight="bold" textLength="27" lengthAdjust="spacingAndGlyphs">VOLVO</text>
<text x="579.8" y="410.9" font-size="3.6" fill="#666" text-anchor="middle" textLength="22.4" lengthAdjust="spacingAndGlyphs">Genuine Parts</text>
<text x="580.4" y="417.3" font-size="5.2" fill="#666" text-anchor="middle" textLength="23.6" lengthAdjust="spacingAndGlyphs">GR-254983</text>
</svg>
<span class="t" id="t0" style="left:13.3px;top:12px;font-size:6.9px;color:#000;font-weight:bold;letter-spacing:0.058px;">RAPORTOI VIRHE</span>
<span class="t" id="t1" style="left:13.3px;top:21px;font-size:6.9px;color:#000;font-weight:bold;letter-spacing:0.130px;">AUTOTIEDOT</span>
<span class="t" id="t2" style="left:13.3px;top:29px;font-size:6.9px;color:#000;font-weight:bold;letter-spacing:-0.069px;">OHJE</span>
<span class="t" id="t3" style="left:200.5px;top:33px;font-size:6.9px;color:#000;font-weight:bold;letter-spacing:0.242px;">KÄYNNISTÄ</span>
<span class="t" id="t4" style="left:307.5px;top:33px;font-size:6.9px;color:#000;font-weight:bold;letter-spacing:0.109px;">AUTON TYYPPI</span>
<span class="t" id="t5" style="left:436px;top:33px;font-size:6.9px;color:#fff;font-weight:bold;letter-spacing:0.150px;">TIEDOT</span>
<span class="t" id="t6" style="left:537px;top:33px;font-size:6.9px;color:#000;font-weight:bold;letter-spacing:0.147px;">TYÖLUETTELO</span>
<span class="t" id="t7" style="left:651px;top:33px;font-size:6.9px;color:#000;font-weight:bold;letter-spacing:0.350px;">VIANETSINTÄ</span>
<span class="t" id="t8" style="left:767px;top:33px;font-size:6.9px;color:#000;font-weight:bold;letter-spacing:0.196px;">OHJELMISTO</span>
<span class="t" id="t9" style="left:896.5px;top:33px;font-size:6.9px;color:#000;font-weight:bold;letter-spacing:0.521px;">ETSI</span>
<span class="t" id="t10" style="left:562px;top:13px;font-size:6.9px;color:#000;letter-spacing:0.009px;">1, EUR</span>
<span class="t" id="t11" style="left:746.5px;top:14px;font-size:6.9px;color:#fff;font-weight:bold;letter-spacing:0.270px;">KIRJAUDU ULOS</span>
<span class="t" id="t12" style="left:19.6px;top:48px;font-size:6.9px;color:#fff;font-weight:bold;letter-spacing:0.021px;">VARAOSAT</span>
<span class="t" id="t13" style="left:83.8px;top:48px;font-size:6.9px;color:#b4cbe4;letter-spacing:0.499px;">KORJAUS</span>
<span class="t" id="t14" style="left:139.2px;top:48px;font-size:6.9px;color:#fff;font-weight:bold;letter-spacing:0.301px;">TUOTE-ERITTELYT</span>
<span class="t" id="t15" style="left:234px;top:48px;font-size:6.9px;color:#fff;font-weight:bold;letter-spacing:0.380px;">VIANETSINTÄ</span>
<span class="t" id="t16" style="left:311px;top:48px;font-size:6.9px;color:#fff;font-weight:bold;letter-spacing:0.252px;">TIEDOTTEET</span>
<span class="t" id="t17" style="left:383px;top:48px;font-size:6.9px;color:#b4cbe4;letter-spacing:0.045px;">LOMAKKEET</span>
<span class="t" id="t18" style="left:679.6px;top:73px;font-size:7.3px;color:#000;font-weight:bold;letter-spacing:-0.172px;">251 : Imuputkisto 5CYL TURBO,</span>
<span class="t" id="t19" style="left:897px;top:65px;font-size:6.9px;color:#000;font-weight:bold;letter-spacing:0.039px;">TULOSTA</span>
<span class="t" id="t20" style="left:703.9px;top:96px;font-size:7px;color:#000;font-weight:bold;letter-spacing:-0.159px;">Kuva</span>
<span class="t" id="t21" style="left:770.6px;top:96px;font-size:7px;color:#000;font-weight:bold;letter-spacing:0.086px;">Nimike</span>
<span class="t" id="t22" style="left:847px;top:96px;font-size:7px;color:#000;font-weight:bold;letter-spacing:-0.273px;">Määrä</span>
<span class="t" id="t23" style="left:879.5px;top:96px;font-size:7px;color:#000;font-weight:bold;letter-spacing:-0.172px;">PS</span>
<span class="t" id="t24" style="left:897px;top:96px;font-size:7px;color:#000;font-weight:bold;letter-spacing:0.109px;">Osanumero</span>
<span class="t" id="t25" style="left:706px;top:109px;font-size:6.9px;color:#000;font-weight:bold;">1</span>
<span class="t" id="t26" style="left:731px;top:109px;font-size:6.9px;color:#000;font-weight:bold;letter-spacing:0.209px;">Imuputki</span>
<span class="t" id="t27" style="left:848.5px;top:109px;font-size:6.9px;color:#000;font-weight:bold;letter-spacing:-0.172px;">1.00</span>
<span class="t" id="t28" style="left:899.2px;top:109px;font-size:6.9px;color:#000;font-weight:bold;letter-spacing:0.092px;">31319804</span>
<span class="t" id="t29" style="left:705.3px;top:121px;font-size:6.9px;color:#000;">2</span>
<span class="t" id="t30" style="left:751px;top:119px;font-size:6.9px;color:#000;letter-spacing:-0.094px;">Tiiviste</span>
<span class="t" id="t31" style="left:848.5px;top:121px;font-size:6.9px;color:#000;letter-spacing:-0.181px;">5.00</span>
<span class="t" id="t32" style="left:899.2px;top:121px;font-size:6.9px;color:#000;letter-spacing:-0.025px;">31331885</span>
<span class="t" id="t33" style="left:705.3px;top:134px;font-size:6.9px;color:#000;">3</span>
<span class="t" id="t34" style="left:751px;top:132px;font-size:6.9px;color:#000;letter-spacing:-0.094px;">Tiiviste</span>
<span class="t" id="t35" style="left:848.5px;top:134px;font-size:6.9px;color:#000;letter-spacing:-0.181px;">1.00</span>
<span class="t" id="t36" style="left:899.2px;top:134px;font-size:6.9px;color:#000;letter-spacing:-0.025px;">31331886</span>
<span class="t" id="t37" style="left:705.3px;top:146px;font-size:6.9px;color:#000;">4</span>
<span class="t" id="t38" style="left:730.5px;top:146px;font-size:6.9px;color:#000;letter-spacing:0.112px;">Imuputki, alempi</span>
<span class="t" id="t39" style="left:848.5px;top:146px;font-size:6.9px;color:#000;letter-spacing:-0.181px;">1.00</span>
<span class="t" id="t40" style="left:899.2px;top:146px;font-size:6.9px;color:#000;letter-spacing:-0.025px;">31338645</span>
<span class="t" id="t41" style="left:705.3px;top:159px;font-size:6.9px;color:#000;">5</span>
<span class="t" id="t42" style="left:751px;top:157px;font-size:6.9px;color:#000;letter-spacing:0.071px;">Kumiholkki</span>
<span class="t" id="t43" style="left:848.5px;top:159px;font-size:6.9px;color:#000;letter-spacing:-0.181px;">3.00</span>
<span class="t" id="t44" style="left:899.2px;top:159px;font-size:6.9px;color:#000;letter-spacing:-0.025px;">30637165</span>
<span class="t" id="t45" style="left:705.3px;top:171px;font-size:6.9px;color:#000;">6</span>
<span class="t" id="t46" style="left:730.5px;top:171px;font-size:6.9px;color:#000;letter-spacing:0.085px;">Aluslevy</span>
<span class="t" id="t47" style="left:735.2px;top:180px;font-size:6.9px;color:#4d6c8c;letter-spacing:0.074px;">8.4x18x2</span>
<span class="t" id="t48" style="left:848.5px;top:171px;font-size:6.9px;color:#000;letter-spacing:-0.181px;">6.00</span>
<span class="t" id="t49" style="left:899.2px;top:171px;font-size:6.9px;color:#000;letter-spacing:-0.023px;">986520</span>
<span class="t" id="t50" style="left:705.3px;top:192px;font-size:6.9px;color:#000;">7</span>
<span class="t" id="t51" style="left:730.5px;top:192px;font-size:6.9px;color:#000;letter-spacing:-0.037px;">Tiiviste</span>
<span class="t" id="t52" style="left:848.5px;top:192px;font-size:6.9px;color:#000;letter-spacing:-0.181px;">1.00</span>
<span class="t" id="t53" style="left:899.2px;top:192px;font-size:6.9px;color:#000;letter-spacing:-0.025px;">30650074</span>
<span class="t" id="t54" style="left:705.3px;top:204px;font-size:6.9px;color:#000;">8</span>
<span class="t" id="t55" style="left:730.5px;top:204px;font-size:6.9px;color:#000;letter-spacing:0.028px;">Laipparuuvi</span>
<span class="t" id="t56" style="left:735.2px;top:213px;font-size:6.9px;color:#4d6c8c;letter-spacing:-0.172px;">M6x25</span>
<span class="t" id="t57" style="left:848.5px;top:204px;font-size:6.9px;color:#000;letter-spacing:-0.181px;">6.00</span>
<span class="t" id="t58" style="left:899.2px;top:204px;font-size:6.9px;color:#000;letter-spacing:-0.023px;">982759</span>
<span class="t" id="t59" style="left:705.3px;top:225px;font-size:6.9px;color:#000;">9</span>
<span class="t" id="t60" style="left:730.5px;top:225px;font-size:6.9px;color:#000;letter-spacing:0.028px;">Laipparuuvi</span>
<span class="t" id="t61" style="left:735.2px;top:233px;font-size:6.9px;color:#4d6c8c;letter-spacing:-0.172px;">M7x30</span>
<span class="t" id="t62" style="left:848.5px;top:225px;font-size:6.9px;color:#000;letter-spacing:-0.181px;">6.00</span>
<span class="t" id="t63" style="left:899.2px;top:225px;font-size:6.9px;color:#000;letter-spacing:-0.023px;">982778</span>
<span class="t" id="t64" style="left:705.8px;top:245px;font-size:6.9px;color:#000;letter-spacing:-0.781px;">10</span>
<span class="t" id="t65" style="left:730.5px;top:245px;font-size:6.9px;color:#000;letter-spacing:0.085px;">Aluslevy</span>
<span class="t" id="t66" style="left:735.2px;top:254px;font-size:6.9px;color:#4d6c8c;letter-spacing:0.074px;">8.4x18x2</span>
<span class="t" id="t67" style="left:848.5px;top:245px;font-size:6.9px;color:#000;letter-spacing:-0.181px;">6.00</span>
<span class="t" id="t68" style="left:899.2px;top:245px;font-size:6.9px;color:#000;letter-spacing:-0.023px;">986520</span>
<span class="t" id="t69" style="left:705.8px;top:266px;font-size:6.9px;color:#000;letter-spacing:-0.781px;">11</span>
<span class="t" id="t70" style="left:848.5px;top:266px;font-size:6.9px;color:#000;letter-spacing:-0.181px;">0.00</span>
<span class="t" id="t71" style="left:735.2px;top:275px;font-size:6.9px;color:#1b6fd0;letter-spacing:0.134px;text-decoration:underline;">Ilmansuodatin ja läppäkotelo</span>
<span class="t" id="t72" style="left:788.7px;top:385px;font-size:6.9px;color:#a2a2a2;font-weight:bold;letter-spacing:0.158px;">LISÄÄ LUETTELOON</span>
<span class="t" id="t73" style="left:881px;top:383px;font-size:9.8px;color:#000;font-family:'Liberation Sans',sans-serif;transform:scaleX(0.8346);transform-origin:0 0;">Uusi Osaluettelo</span>
<span class="t" id="t74" style="left:793px;top:397px;font-size:6.9px;color:#fff;font-weight:bold;letter-spacing:-0.131px;">KOMMENTIT</span>
<span class="t" id="t75" style="left:690.6px;top:447px;font-size:6.9px;color:#a2a2a2;font-weight:bold;letter-spacing:0.580px;">PÄIVITÄ</span>
<span class="t" id="t76" style="left:741.7px;top:447px;font-size:6.9px;color:#000;font-weight:bold;letter-spacing:0.402px;">LISÄÄ</span>
<span class="t" id="t77" style="left:783.4px;top:447px;font-size:6.9px;color:#a2a2a2;font-weight:bold;letter-spacing:0.312px;">POISTA</span>
</div></body></html>
